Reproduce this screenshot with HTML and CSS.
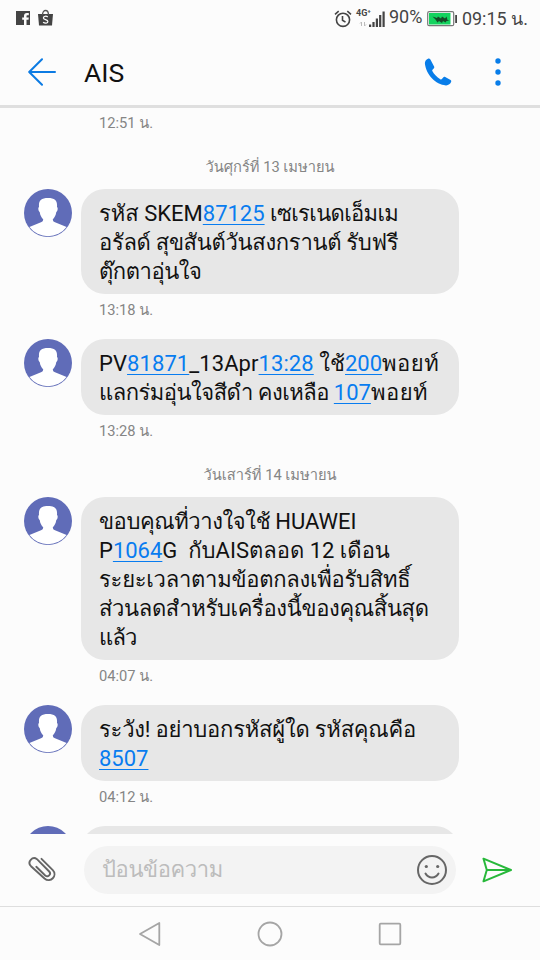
FILE: index.html
```html
<!DOCTYPE html>
<html lang="th">
<head>
<meta charset="utf-8">
<title>AIS</title>
<link rel="stylesheet" href="styles.css">
</head>
<body>
<svg class="defs" width="0" height="0" aria-hidden="true">
  <symbol id="person" viewBox="0 0 48 48">
    <circle cx="24" cy="24" r="24" fill="#606cb8"/>
    <path d="M24 9C17 9 14.500 11.500 15 18C13.800 18.500 14.300 22.500 15.700 23C16.200 26.500 17.500 28.700 19.200 30.300C19.200 32 18.500 32.700 17 33.300L5.400 38A23.300 23.300 0 0 0 42.600 38L31 33.300C29.500 32.700 28.800 32 28.800 30.300C30.500 28.700 31.800 26.500 32.300 23C33.700 22.500 34.200 18.500 33 18C33.500 11.500 31 9 24 9z" fill="#fff"/>
  </symbol>
</svg>
<div class="screen">
  <div class="status">
    <svg class="status-left" width="40" height="20" viewBox="0 0 40 20">
      <path fill="#444" fill-rule="evenodd" d="M0 2h14v14H10.500V10.800h2l.3-2.200h-2.300V7.200c0-.7.3-1 1-1h1.300V4h-1.900C8.900 4 8 5.200 8 6.900v1.700H6.200v2.200H8V16H0z"/>
      <path fill="#444" d="M22 5h15l-1 11.500H23z"/>
      <path fill="none" stroke="#555" stroke-width="1.300" d="M26.500 6c0-6 6-6 6 0"/>
      <path fill="none" stroke="#fff" stroke-width="1.200" d="M31.800 8c-1.600-1.300-4.400-.9-4.400.9 0 2 4.500 1.500 4.500 3.600 0 1.900-3 2-4.800.7"/>
    </svg>
    <svg class="alarm" width="18" height="18" viewBox="0 0 18 18" fill="none" stroke="#444" stroke-width="1.600">
      <circle cx="9" cy="9.800" r="6.600"/><path d="M8.500 6v4.300l3 1.800M1 4.300 4.700 1.200M17 4.300 13.300 1.200"/>
    </svg>
    <div class="net">
      <span class="net-type">4G⁺</span>
      <svg width="31" height="20" viewBox="0 0 31 20">
        <path d="M5.500 17v-4m-1.500 1.500 1.500-1.500M8.500 13v4m1.500-1.500L8.500 17" stroke="#bbb" fill="none"/>
        <path d="M13 15.500h2.200V18H13zM16.400 13h2.200v5h-2.200zM19.800 9.500H22V18h-2.200zM23.100 6h2.200v12h-2.200zM26.500 2.500h2.200V18h-2.200z" fill="#444"/>
      </svg>
    </div>
    <span class="pct">90%</span>
    <svg class="battery" width="31" height="16" viewBox="0 0 31 16">
      <rect x=".7" y=".7" width="26" height="14" rx="1.500" fill="#fff" stroke="#777" stroke-width="1.200"/>
      <rect x="2" y="2" width="21.500" height="11.500" fill="#14d35f"/>
      <path d="M5.500 5.500 10 7l1-1.500 3 2 1-2 3 2 1.500-2 1 3.500 2 .7-3 .3-1 1.500-2.500-1.500-1 2-3-2-1.500 1.500-2-3z" fill="#174b29"/>
      <path d="M28.200 4h1.800v8h-1.800z" fill="#444"/>
    </svg>
    <span class="clock">09:15 น.</span>
  </div>
  <header class="bar">
    <svg class="back" width="28" height="28" viewBox="0 0 28 28" fill="none" stroke="#0c7be3" stroke-width="2" stroke-linecap="round" stroke-linejoin="round"><path d="M27 14H1.500M14 1.200 1.200 14 14 26.800"/></svg>
    <h1>AIS</h1>
    <svg class="call" width="28" height="28" viewBox="0 0 28 28"><path fill="#087de9" d="M4 .7C2.200 1.300.7 3.400.9 5.600 2 16.500 11.500 26.800 22 27.400c2.200.1 4.500-1.500 5.200-3.600.2-.7 0-1.300-.6-1.700l-5.400-3.100c-.7-.4-1.500-.2-2 .4l-1.300 1.600c-.4.5-1 .6-1.600.2-3.600-2.200-6-4.600-8-8.200-.3-.6-.1-1.200.4-1.600l1-.8c.6-.5.8-1.300.4-2L6.400 1.500C5.900.7 5 .4 4 .7z"/></svg>
    <svg class="more" width="6" height="28" viewBox="0 0 6 28" fill="#087de9"><circle cx="3" cy="3" r="2.700"/><circle cx="3" cy="14" r="2.700"/><circle cx="3" cy="25" r="2.700"/></svg>
  </header>
  <main class="thread">
    <time class="sent">12:51 น.</time>
    <div class="day">วันศุกร์ที่ 13 เมษายน</div>
    <article class="msg">
      <svg class="avatar"><use href="#person"/></svg>
      <p class="bubble"><span class="line l1"><i>รหัส SKEM<a>87125</a> </i>เซเรเนดเอ็มเม</span><span class="line l2">อรัลด์ สุขสันต์วันสงกรานต์ รับฟรี</span><span class="line l3">ตุ๊กตาอุ่นใจ</span></p>
    </article>
    <time class="sent">13:18 น.</time>
    <article class="msg">
      <svg class="avatar"><use href="#person"/></svg>
      <p class="bubble"><span class="line l4">PV<a>81871</a>_13Apr<a>13:28</a> <i>ใช้<a>200</a></i><i class="wide">พอยท์</i></span><span class="line l5">แลกร่มอุ่นใจสีดำ คงเหลือ <i><a>107</a></i><i class="wide">พอยท์</i></span></p>
    </article>
    <time class="sent">13:28 น.</time>
    <div class="day">วันเสาร์ที่ 14 เมษายน</div>
    <article class="msg">
      <svg class="avatar"><use href="#person"/></svg>
      <p class="bubble"><span class="line l6">ขอบคุณที่วางใจใช้ <i>HUAWEI</i></span><span class="line">P<a>1064</a>G&nbsp; กับAISตลอด 12 เดือน</span><span class="line l8">ระยะเวลาตามข้อตกลงเพื่อรับสิทธิ์</span><span class="line l9">ส่วนลดสำหรับเครื่องนี้ของคุณสิ้นสุด</span><span class="line l10">แล้ว</span></p>
    </article>
    <time class="sent">04:07 น.</time>
    <article class="msg">
      <svg class="avatar"><use href="#person"/></svg>
      <p class="bubble"><span class="line l11">ระวัง! อย่าบอกรหัสผู้ใด รหัสคุณคือ</span><span class="line"><a>8507</a></span></p>
    </article>
    <time class="sent">04:12 น.</time>
    <article class="msg">
      <svg class="avatar"><use href="#person"/></svg>
      <p class="bubble"></p>
    </article>
  </main>
  <div class="compose">
    <svg class="clip" width="28" height="28" viewBox="0 0 28 28" fill="none" stroke="#666" stroke-width="1.900" stroke-linecap="round"><path d="M13.500 2.800 24.800 14.200c5 5.200-2.200 13.500-8.300 8.300L3 10.200C-1.200 6 4.500-.2 9 3.200L21.200 15.500c2.500 2.700-1.200 6.200-4 4L8.300 10.800"/></svg>
    <div class="field"><span class="hint">ป้อนข้อความ</span>
      <svg width="30" height="30" viewBox="0 0 30 30" fill="none" stroke="#666" stroke-width="2" stroke-linecap="round"><circle cx="15" cy="15" r="14"/><path d="M8.500 18.500c3 5.300 10 5.300 13 0"/><circle cx="9.300" cy="11.500" r="1.600" fill="#666" stroke="none"/><circle cx="20.700" cy="11.500" r="1.600" fill="#666" stroke="none"/></svg>
    </div>
    <svg class="send" width="30" height="26" viewBox="0 0 30 26" fill="none" stroke="#27b83a" stroke-width="2" stroke-linejoin="round"><path d="M1.500 1.700 29 13 1.500 24.300 4.800 13zM4.800 13H29"/></svg>
  </div>
  <nav class="nav">
    <svg width="26" height="26" viewBox="0 0 26 26"><path d="M22.300 2v22L3 13z"/></svg>
    <svg width="26" height="26" viewBox="0 0 26 26"><circle cx="13" cy="13" r="11.500"/></svg>
    <svg width="26" height="26" viewBox="0 0 26 26"><rect x="2.700" y="2.700" width="20.600" height="20.600" rx="1"/></svg>
  </nav>
</div>
</body>
</html>
```
FILE: styles.css
```css
* { box-sizing: border-box; }
body { margin: 0; font-family: Roboto, Loma, serif; background: #fcfcfc; color: #111; }
svg { display: block; flex: none; }
.defs { position: absolute; }
.screen { width: 540px; height: 960px; display: flex; flex-direction: column; overflow: hidden; }
.status { height: 37px; flex: none; display: flex; align-items: center; padding-left: 16px; color: #444; white-space: nowrap; }
.status-left { margin-right: 278px; }
.net { display: flex; width: 32px; margin-left: 4px; position: relative; }
.net-type { position: absolute; left: 0; top: 0; font-size: 9px; line-height: 9px; font-weight: 700; }
.pct { font-size: 18px; width: 35px; margin-top: -4px; padding-left: 1px; line-height: 20px; }
.battery { margin-left: 4px; }
.clock { font-size: 17.900px; line-height: 22px; margin: 1px 0 0 4px; }
.bar { height: 71px; flex: none; display: flex; align-items: center; padding: 2px 0 0 28px; border-bottom: 3px solid #dfdfdf; }
.bar h1 { font-size: 26.500px; font-weight: 400; line-height: 30px; margin: 0; width: 340px; padding: 1px 0 0 28px; }
.call { margin-left: 28px; }
.more { margin-left: 43px; }
.thread { height: 726px; flex: none; overflow: hidden; }
.sent { display: block; height: 45px; padding: 5px 0 0 99px; font-size: 14.700px; line-height: 22px; color: #858585; }
.thread > .sent:first-child { height: 44px; padding-top: 4px; }
.day { height: 37px; text-align: center; font-size: 14.700px; line-height: 30px; color: #858585; }
.msg { display: flex; padding-left: 24px; gap: 9px; }
.avatar { width: 48px; height: 48px; }
.bubble { margin: 0; width: 378px; min-height: 76px; padding: 10px 18px 8px; border-radius: 30px; background: #e7e7e7; font-size: 22px; line-height: 29px; border-radius: 24px; }
.line { display: block; height: 29px; white-space: nowrap; }
.line i { font-style: normal; letter-spacing: 0; }
.line .wide { letter-spacing: .5px; }
.line a { color: #087cf0; text-decoration: underline; text-decoration-thickness: 1px; text-underline-offset: 3px; }
.l1 { letter-spacing: -.65px; }
.l2 { letter-spacing: -.3px; }
.l3 { letter-spacing: -.45px; }
.l4 { letter-spacing: .08px; }
.l5 { letter-spacing: -.5px; }
.l6 { letter-spacing: -.42px; }
.l8 { letter-spacing: -.25px; }
.l9 { letter-spacing: -.35px; }
.l10 { letter-spacing: -.8px; }
.l11 { letter-spacing: -.22px; }
.compose { height: 72px; flex: none; display: flex; align-items: center; padding-left: 28px; }
.field { width: 372px; height: 48px; margin-left: 28px; border-radius: 24px; background: #f3f3f3; display: flex; align-items: center; justify-content: space-between; padding: 0 9px 0 18px; }
.hint { font-size: 22px; line-height: 30px; color: #bcbcbc; letter-spacing: -.4px; }
.send { margin-left: 26px; }
.nav { height: 54px; flex: none; border-top: 1px solid #dedede; display: flex; justify-content: center; align-items: center; gap: 94px; }
.nav svg { fill: none; stroke: #a5a5a5; stroke-width: 1.800; stroke-linejoin: round; }
```
